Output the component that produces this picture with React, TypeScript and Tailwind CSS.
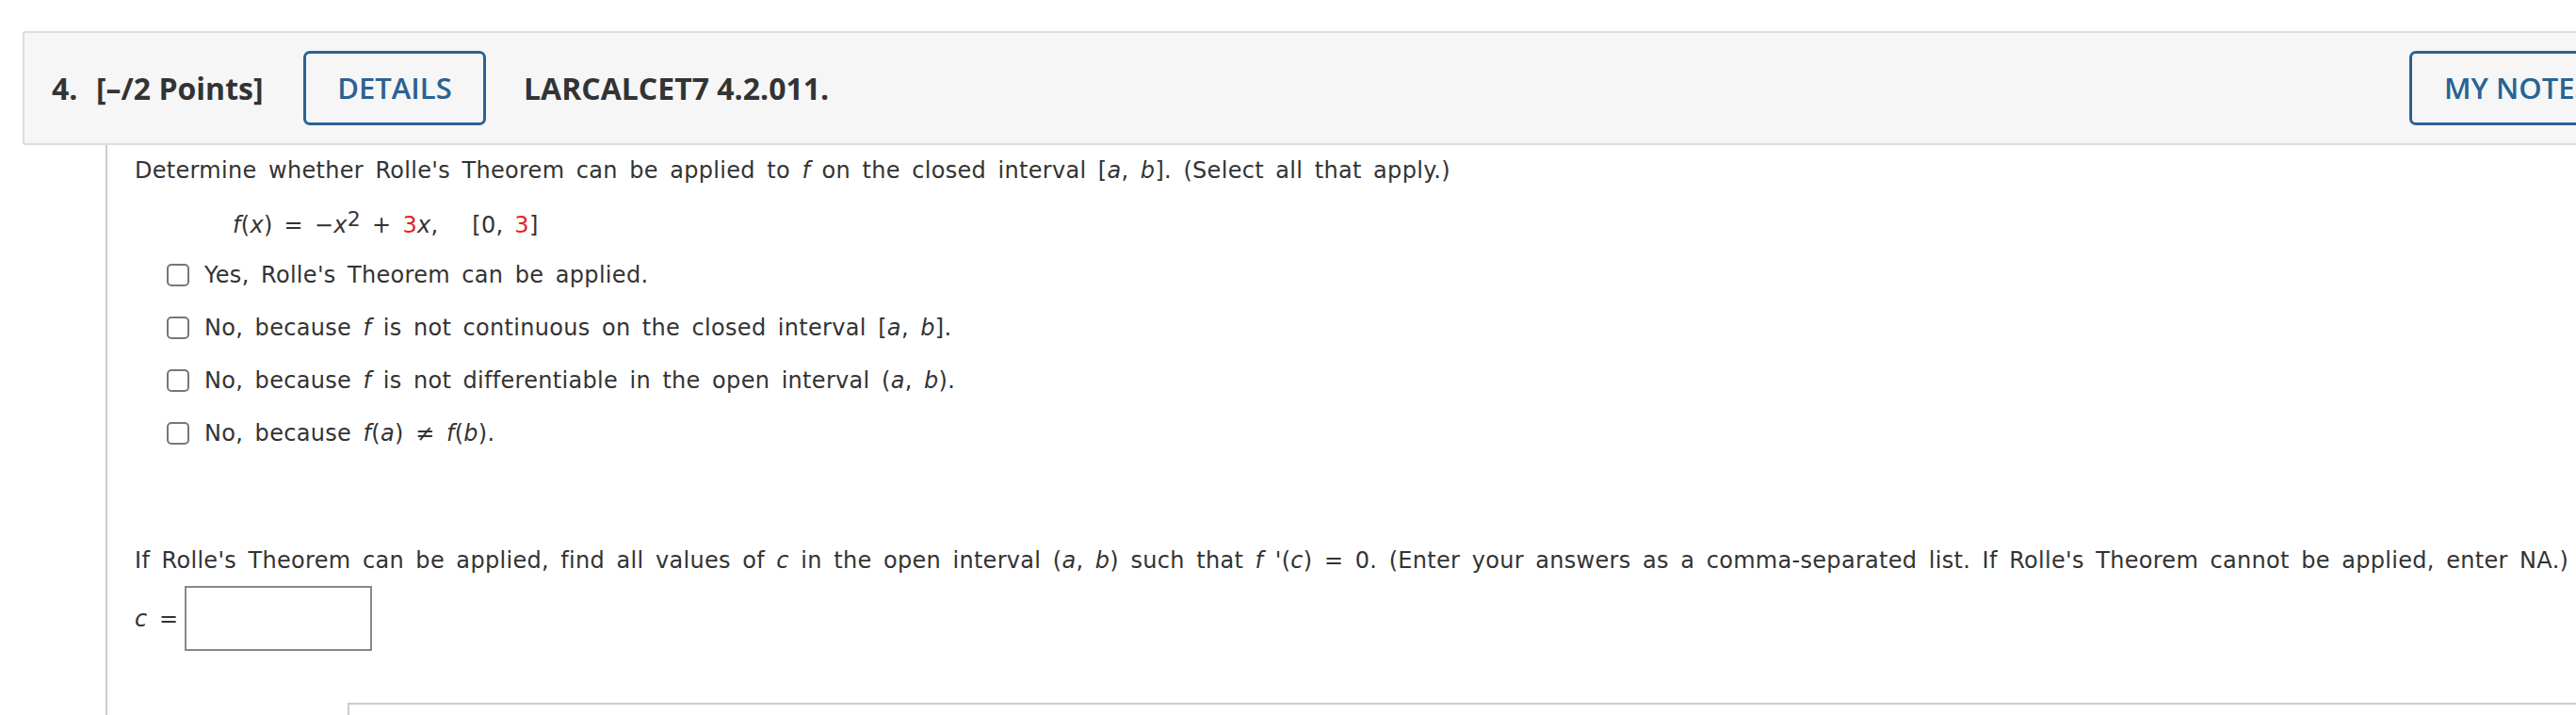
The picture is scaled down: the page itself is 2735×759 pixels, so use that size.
import React from 'react';

const body = "font-['DejaVu_Sans',Verdana,sans-serif] text-[24px] tracking-[0.3px] [word-spacing:4.5px]";

function Checkbox() {
  return <span className="inline-block h-[24px] w-[24px] shrink-0 rounded-[5px] border-2 border-[#777] bg-white" />;
}

function Option({ children }: { children: React.ReactNode }) {
  return (
    <div className="flex h-[56px] items-center gap-[16px] pl-[34px]">
      <Checkbox />
      <span className="leading-[56px]">{children}</span>
    </div>
  );
}

export default function App() {
  return (
    <div className="min-h-[759px] overflow-hidden bg-white pt-[33px] text-[#333]">
      <div className="ml-[24px] flex h-[121px] w-[2711px] items-center whitespace-nowrap rounded-tl-[3px] rounded-bl-[3px] border-y-2 border-l-2 border-[#ddd] bg-[#f6f6f6] font-['Open_Sans',sans-serif] text-[32px] font-bold">
        <span className="ml-[29px] w-[47px] shrink-0">4.</span>
        <span className="w-[220px] shrink-0">[–/2 Points]</span>
        <button className="h-[79px] w-[194px] shrink-0 rounded-[7px] border-[3px] border-[#2a6293] text-[31px] font-semibold text-[#2a6293]">DETAILS</button>
        <span className="ml-[40px] flex-1">LARCALCET7 4.2.011.</span>
        <button className="-mr-[25px] h-[79px] w-[202px] shrink-0 overflow-hidden rounded-[7px] border-[3px] border-[#2a6293] pl-[34px] text-left text-[31px] font-semibold text-[#2a6293]">MY NOTES</button>
      </div>
      <div className={`ml-[112px] h-[620px] border-l-2 border-[#ccc] pl-[29px] ${body} whitespace-nowrap`}>
        <div className="h-[54px] leading-[54px]">
          Determine whether Rolle's Theorem can be applied to <i>f</i> on the closed interval [<i>a</i>, <i>b</i>]. (Select all that apply.)
        </div>
        <div className="h-[56px] pl-[104px] leading-[62px] [word-spacing:4px]">
          <i>f</i>(<i>x</i>) = −<i>x</i>
          <sup className="relative -top-[7px] text-[22px]">2</sup> + <span className="text-[#e3261c]">3</span>
          <i>x</i>,{'\u00a0\u00a0\u00a0'}[0, <span className="text-[#e3261c]">3</span>]
        </div>
        <Option>Yes, Rolle's Theorem can be applied.</Option>
        <Option>
          No, because <i>f</i> is not continuous on the closed interval [<i>a</i>, <i>b</i>].
        </Option>
        <Option>
          No, because <i>f</i> is not differentiable in the open interval (<i>a</i>, <i>b</i>).
        </Option>
        <Option>
          No, because <i>f</i>(<i>a</i>) ≠ <i>f</i>(<i>b</i>).
        </Option>
        <div className="mt-[92px] h-[30px] leading-[30px]">
          If Rolle's Theorem can be applied, find all values of <i>c</i> in the open interval (<i>a</i>, <i>b</i>) such that <i>f</i> '(<i>c</i>) = 0. (Enter your answers as a comma-separated list. If Rolle's Theorem cannot be applied, enter NA.)
        </div>
        <div className="mt-[12px] flex items-center">
          <span className="w-[53px] shrink-0">
            <i>c</i> =
          </span>
          <input className="h-[69px] w-[199px] border-2 border-[#888] bg-white outline-none" />
        </div>
        <div className="ml-[226px] mt-[55px] h-[60px] border-l-2 border-t-2 border-[#ccc]" />
      </div>
    </div>
  );
}
